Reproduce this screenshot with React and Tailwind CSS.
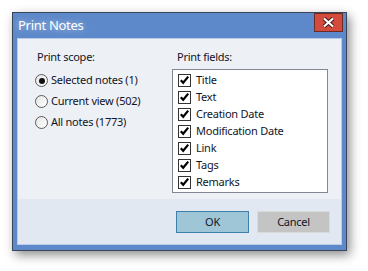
const font = { fontFamily: '"Noto Sans", "Open Sans", sans-serif' };

function Radio({ checked, label }) {
  return (
    <div className="flex h-[21px] items-center">
      <span className="flex h-[13px] w-[13px] items-center justify-center rounded-full border border-[#5b5b5b] bg-gradient-to-br from-[#e6e6e6] to-white">
        {checked && <span className="h-[6px] w-[6px] rounded-full bg-[#111]" />}
      </span>
      <span className="ml-[3px] text-[11px] tracking-[-0.25px] text-[#111527]">{label}</span>
    </div>
  );
}

function Check({ label }) {
  return (
    <div className="flex h-[17px] items-center">
      <span className="flex h-[13px] w-[13px] items-center justify-center border border-[#333] bg-white">
        <svg width="11" height="11" viewBox="0 0 11 11">
          <path d="M1.8 5.2 L4.2 7.8 L9.2 1.6" fill="none" stroke="#000" strokeWidth="2.2" />
        </svg>
      </span>
      <span className="ml-[5px] text-[11px] tracking-[-0.25px] text-[#111527]">{label}</span>
    </div>
  );
}

export default function App() {
  const fields = ['Title', 'Text', 'Creation Date', 'Modification Date', 'Link', 'Tags', 'Remarks'];

  return (
    <div className="h-[271px] w-[368px] bg-white pl-[12px] pt-[12px]" style={font}>
      <div className="flex h-[239px] w-[335px] flex-col border border-[#3a4657] bg-[#5d89ca] shadow-[3px_4px_10px_rgba(0,0,0,0.45)]">
        {/* title bar */}
        <div className="flex h-[25px] items-start justify-between pl-[5px] pr-[3px]">
          <span className="mt-[3px] text-[13px] leading-[18px] tracking-[-0.3px] text-white [text-shadow:0_0_6px_rgba(255,255,255,0.6)]">Print Notes</span>
          <div className="flex h-[19px] w-[29px] items-center justify-center border border-[#6b2b25] bg-[#d44b3e]">
            <svg width="13" height="11" viewBox="0 0 13 11">
              <path d="M2 1.5 L11 9.5 M11 1.5 L2 9.5" stroke="#3a1a16" strokeWidth="4" />
              <path d="M2 1.5 L11 9.5 M11 1.5 L2 9.5" stroke="#fff" strokeWidth="2.2" />
            </svg>
          </div>
        </div>

        <div className="flex flex-1 flex-col px-[4px] pb-[5px]">
          <div className="flex flex-1 flex-col border border-[#b9cce8]">
            {/* body */}
            <div className="flex h-[160px] bg-[#edf0f5] pl-[17px] pt-[10px]">
              <div className="w-[137px]">
                <div className="pl-[2px] text-[11px] leading-[16px] tracking-[-0.25px] text-[#111527]">Print scope:</div>
                <div className="mt-[5px]">
                  <Radio checked label="Selected notes (1)" />
                  <Radio label="Current view (502)" />
                  <Radio label="All notes (1773)" />
                </div>
              </div>
              <div className="w-[156px]">
                <div className="pl-[5px] text-[11px] leading-[16px] tracking-[-0.25px] text-[#111527]">Print fields:</div>
                <div className="mt-[4px] h-[124px] border border-[#828790] bg-white pl-[5px] pt-[2px]">
                  {fields.map((f) => (
                    <Check key={f} label={f} />
                  ))}
                </div>
              </div>
            </div>

            {/* footer */}
            <div className="flex flex-1 items-start justify-end gap-[8px] bg-[#e2e8f1] pr-[11px] pt-[12px]">
              <button className="h-[22px] w-[73px] border border-[#3f7fab] bg-[#9fc6d7] text-[11px] tracking-[-0.25px] text-[#111527]">OK</button>
              <button className="h-[22px] w-[73px] border border-[#dadada] bg-[#c4c4c4] text-[11px] tracking-[-0.25px] text-[#111527]">Cancel</button>
            </div>
          </div>
        </div>
      </div>
    </div>
  );
}
